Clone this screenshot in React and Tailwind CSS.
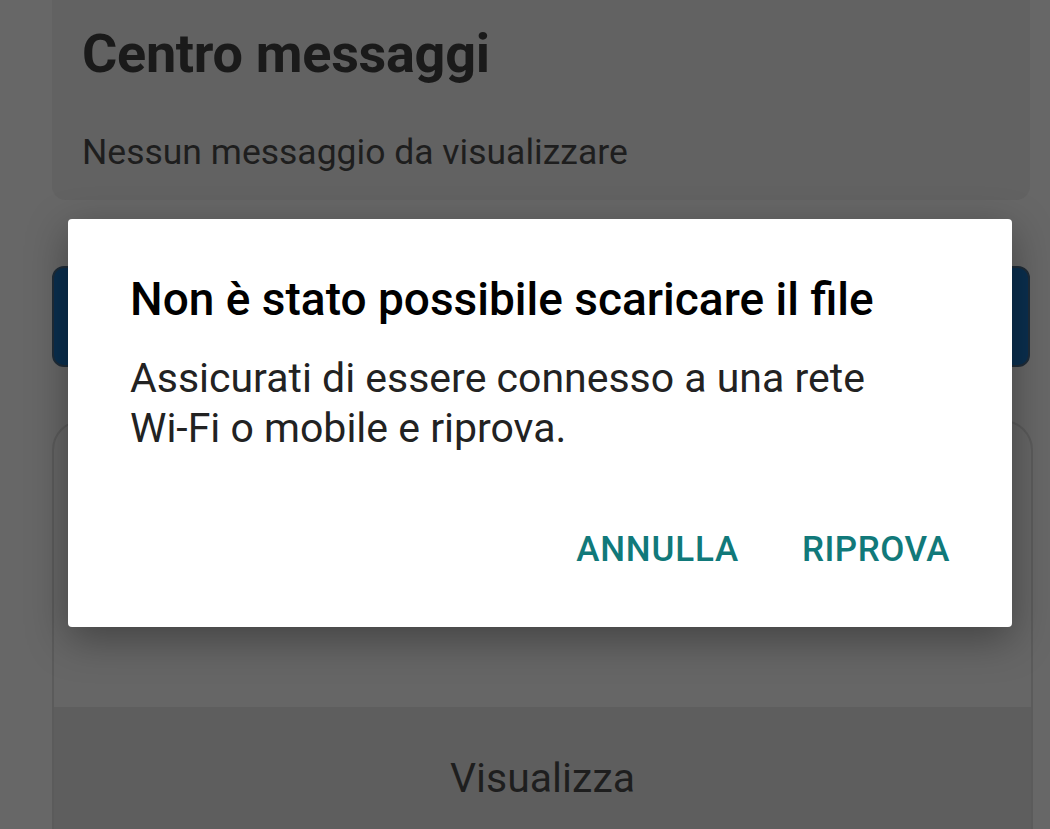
export default function App() {
  return (
    <div className="relative w-[1050px] h-[829px] overflow-hidden bg-[#676767]" style={{ fontFamily: 'Roboto, "Noto Sans", sans-serif' }}>
      <div className="flex flex-col ml-[52px]">
        <div className="w-[978px] h-[220px] -mt-[20px] rounded-[14px] bg-[#626262] px-[30px] pt-[44px]">
          <h1 className="text-[54px] font-bold leading-[60px] text-[#1a1a1a] tracking-[-0.3px]">Centro messaggi</h1>
          <p className="mt-[46px] text-[35.5px] leading-[44px] text-[#1e1e1e]">Nessun messaggio da visualizzare</p>
        </div>
        <div className="mt-[66px] w-[978px] h-[101px] rounded-[12px] bg-[#0a2f4f] border-2 border-[#1f2c38]"></div>
        <div className="mt-[53px] w-[981px] h-[420px] rounded-t-[30px] border-2 border-[#5b5b5b] bg-[#666666] flex flex-col">
          <div className="h-[285px]"></div>
          <div className="flex-1 bg-[#5e5e5e] flex justify-center pt-[46px]">
            <span className="text-[41px] leading-[50px] text-[#1e1e1e]">Visualizza</span>
          </div>
        </div>
      </div>

      <div className="absolute left-[68px] top-[219px] w-[944px] h-[408px] bg-white rounded-[4px] shadow-[0_12px_40px_rgba(0,0,0,0.35)] flex flex-col px-[62px] pt-[52px]">
        <h2 className="text-[46px] font-medium leading-[56px] text-black whitespace-nowrap">Non è stato possibile scaricare il file</h2>
        <p className="mt-[26px] text-[41px] leading-[50px] text-[#222222] whitespace-nowrap">
          Assicurati di essere connesso a una rete
          <br />
          Wi-Fi o mobile e riprova.
        </p>
        <div className="mt-auto mb-[57px] flex justify-end gap-[63px]">
          <span className="text-[35px] font-medium leading-[40px] text-[#11797a] tracking-[0.8px]">ANNULLA</span>
          <span className="text-[35px] font-medium leading-[40px] text-[#11797a] tracking-[0.5px]">RIPROVA</span>
        </div>
      </div>
    </div>
  );
}
